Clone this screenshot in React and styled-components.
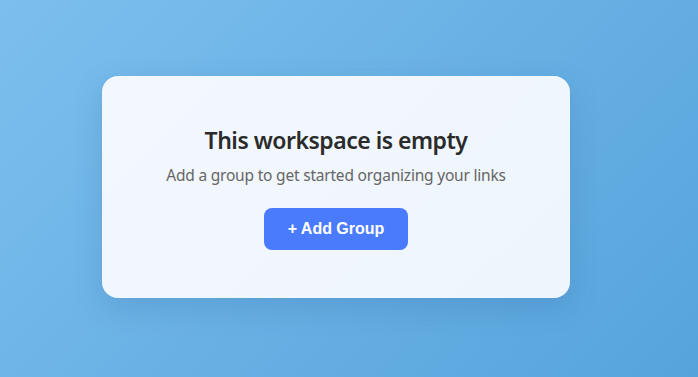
import React from 'react';
import styled, { createGlobalStyle } from 'styled-components';

const GlobalStyle = createGlobalStyle`
  html, body {
    margin: 0;
    padding: 0;
    height: 100%;
  }
  body {
    font-family: "Noto Sans", "Open Sans", sans-serif;
  }
  #root {
    height: 100%;
  }
`;

const Page = styled.div`
  align-items: center;
  background: linear-gradient(135deg, #7cbfee 0%, #56a3dc 100%);
  box-sizing: border-box;
  display: flex;
  height: 100%;
  justify-content: center;
  padding: 0 26px 4px 0;
`;

const Card = styled.div`
  align-items: center;
  background: linear-gradient(135deg, #f3f8fe 0%, #eef5fc 100%);
  border-radius: 16px;
  box-shadow: 0 10px 30px rgba(30, 80, 140, 0.18);
  box-sizing: border-box;
  display: flex;
  flex-direction: column;
  padding: 48px;
  width: 468px;
`;

const Title = styled.h2`
  color: #2b2b2b;
  font-size: 23px;
  font-weight: 600;
  letter-spacing: -0.5px;
  line-height: 32px;
  margin: 0 0 7px;
`;

const Subtitle = styled.p`
  color: #666;
  font-size: 15.5px;
  letter-spacing: -0.2px;
  line-height: 24px;
  margin: 0 0 21px;
`;

const Button = styled.button`
  background: #4b7bfd;
  border: none;
  border-radius: 8px;
  color: #fff;
  cursor: pointer;
  font-family: "Liberation Sans", Arial, sans-serif;
  font-size: 16px;
  font-weight: 700;
  height: 42px;
  padding: 0 24px;
  white-space: nowrap;
`;

export default function App() {
  return (
    <>
      <GlobalStyle />
      <Page>
        <Card>
          <Title>This workspace is empty</Title>
          <Subtitle>Add a group to get started organizing your links</Subtitle>
          <Button>+ Add Group</Button>
        </Card>
      </Page>
    </>
  );
}
